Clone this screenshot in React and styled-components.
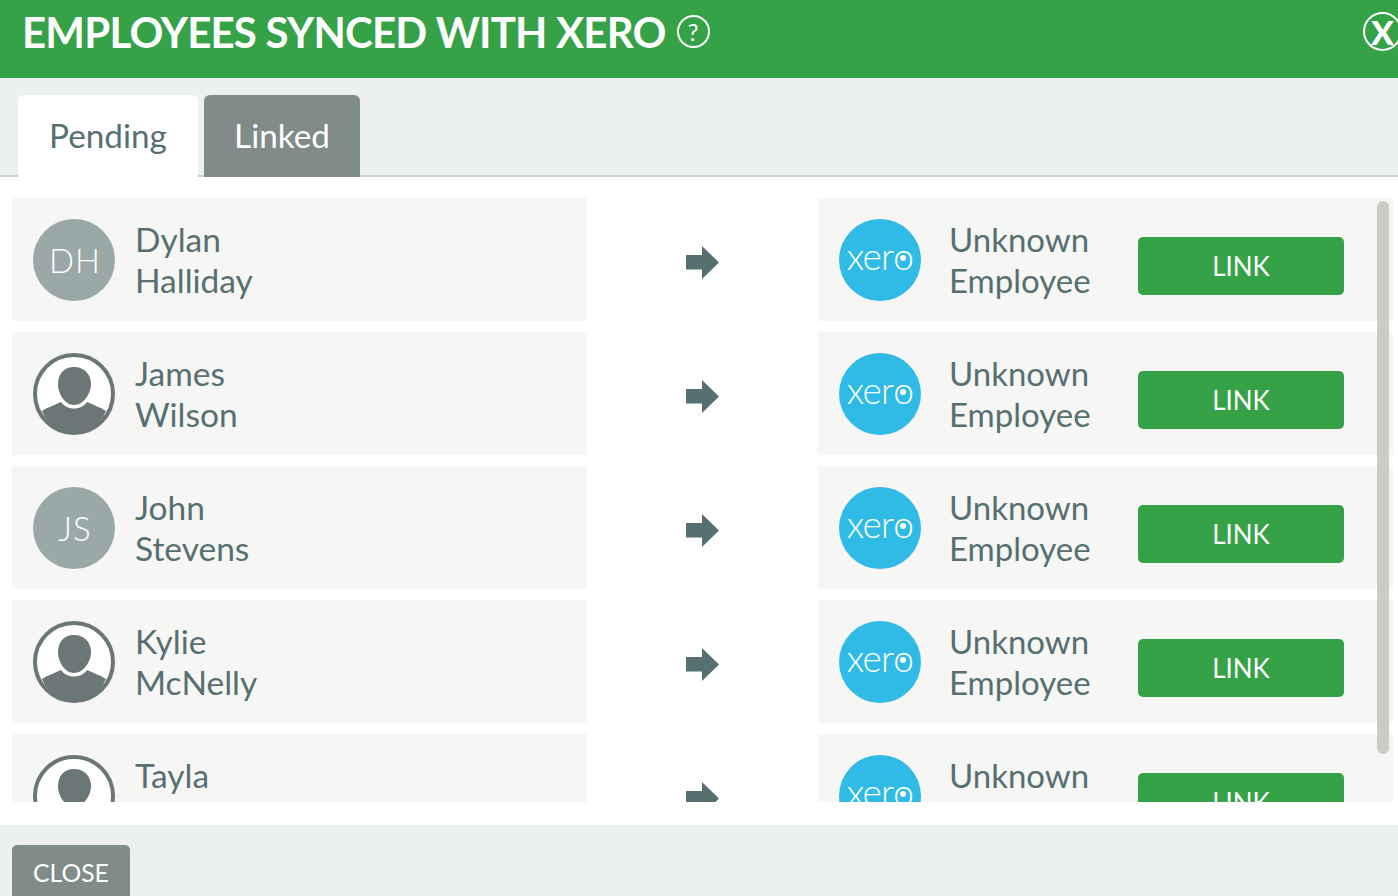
import React from 'react';
import styled, { createGlobalStyle } from 'styled-components';

const GREEN = '#35a247';
const SLATE = '#567072';
const GREY = '#7f8c8a';

const employees = [
  { id: 1, first: 'Dylan', last: 'Halliday', initials: 'DH' },
  { id: 2, first: 'James', last: 'Wilson' },
  { id: 3, first: 'John', last: 'Stevens', initials: 'JS' },
  { id: 4, first: 'Kylie', last: 'McNelly' },
  { id: 5, first: 'Tayla', last: '\u00a0' },
];

const PersonIcon = () => (
  <svg width="82" height="82" viewBox="0 0 82 82">
    <circle cx="41" cy="41" r="39" fill="#fff" stroke="#6b7676" strokeWidth="4" />
    <path d="M9 58 C15 54 22 52 28 49 C31 53 35 55.5 41 55.5 C47 55.5 51 53 54 49 C60 52 67 54 73 58 C67 72 55 80 41 80 C27 80 15 72 9 58 Z" fill="#6b7676" />
    <path d="M41 14 C51 14 58 21 58 31 C58 41 50 52 41 52 C32 52 25 41 25 31 C25 21 31 14 41 14 Z" fill="#6b7676" />
  </svg>
);

const ArrowIcon = () => (
  <svg width="33" height="33" viewBox="0 0 33 33">
    <path d="M0 9 H16 V0 L33 16.5 L16 33 V23.5 H0 Z" fill={SLATE} />
  </svg>
);

const App = () => {
  return (
    <Modal>
      <GlobalStyle />
      <Header>
        <Title>EMPLOYEES SYNCED WITH XERO</Title>
        <HelpIcon>?</HelpIcon>
        <CloseIcon>X</CloseIcon>
      </Header>
      <TabBar>
        <Tab $active>Pending</Tab>
        <Tab>Linked</Tab>
      </TabBar>
      <Body>
        <Scroller>
          {employees.map(employee => (
            <Row key={employee.id}>
              <Cell>
                {employee.initials ? (
                  <Initials>{employee.initials}</Initials>
                ) : (
                  <AvatarSlot>
                    <PersonIcon />
                  </AvatarSlot>
                )}
                <Name>
                  {employee.first}
                  <br />
                  {employee.last}
                </Name>
              </Cell>
              <ArrowCell>
                <ArrowIcon />
              </ArrowCell>
              <Cell>
                <XeroBadge>
                  xer<XeroO>o</XeroO>
                </XeroBadge>
                <XeroName>
                  Unknown
                  <br />
                  Employee
                </XeroName>
                <LinkButton>LINK</LinkButton>
              </Cell>
            </Row>
          ))}
        </Scroller>
        <ScrollThumb />
      </Body>
      <Footer>
        <CloseButton>CLOSE</CloseButton>
      </Footer>
    </Modal>
  );
};
export default App;

const GlobalStyle = createGlobalStyle`
  html, body {
    margin: 0;
    height: 100%;
    overflow: hidden;
    background: #fff;
  }
  * {
    box-sizing: border-box;
  }
`;

const Modal = styled.div`
  width: 1398px;
  height: 896px;
  display: flex;
  flex-direction: column;
  overflow: hidden;
  font-family: Lato, 'Liberation Sans', sans-serif;
  color: ${SLATE};
`;

const Header = styled.div`
  height: 78px;
  flex: none;
  padding: 0 0 15px 22px;
  display: flex;
  align-items: center;
  position: relative;
  background-color: ${GREEN};
  color: #fff;
`;

const Title = styled.h1`
  margin: 0;
  font-size: 42px;
  font-weight: 700;
  letter-spacing: -0.8px;
  white-space: nowrap;
`;

const HelpIcon = styled.span`
  width: 33px;
  height: 33px;
  margin-left: 11px;
  border: 2px solid #fff;
  border-radius: 50%;
  display: flex;
  align-items: center;
  justify-content: center;
  font-size: 24px;
  font-weight: 400;
`;

const CloseIcon = styled.span`
  position: absolute;
  left: 1363px;
  top: 12px;
  width: 39px;
  height: 39px;
  border: 2px solid #fff;
  border-radius: 50%;
  display: flex;
  align-items: center;
  justify-content: center;
  font-size: 33px;
  font-weight: 900;
`;

const TabBar = styled.div`
  height: 99px;
  flex: none;
  padding: 17px 0 0 18px;
  display: flex;
  gap: 6px;
  background-color: #ecf0f1;
  border-bottom: 2px solid #cfd1d1;
`;

const Tab = styled.div`
  width: ${props => (props.$active ? '180px' : '156px')};
  height: 82px;
  padding-bottom: 3px;
  border-radius: 6px 6px 0 0;
  display: flex;
  align-items: center;
  justify-content: center;
  font-size: 33.3px;
  background-color: ${props => (props.$active ? '#fff' : GREY)};
  color: ${props => (props.$active ? SLATE : '#fff')};
`;

const Body = styled.div`
  height: 648px;
  flex: none;
  padding: 21px 0 23px 12px;
  position: relative;
  background-color: #fff;
`;

const Scroller = styled.div`
  height: 100%;
  display: flex;
  flex-direction: column;
  gap: 11px;
  overflow: hidden;
`;

const ScrollThumb = styled.div`
  position: absolute;
  left: 1377px;
  top: 24px;
  width: 12px;
  height: 553px;
  border-radius: 6px;
  background-color: #cbcbc8;
`;

const Row = styled.div`
  flex: none;
  height: 123px;
  display: grid;
  grid-template-columns: 575px 231px 575px;
`;

const Cell = styled.div`
  padding-left: 21px;
  display: flex;
  align-items: center;
  background-color: #f6f6f4;
`;

const ArrowCell = styled.div`
  display: flex;
  align-items: center;
  justify-content: center;
  padding-top: 5px;
`;

const AvatarSlot = styled.div`
  width: 82px;
  height: 82px;
  flex: none;
  display: flex;
`;

const Initials = styled.div`
  width: 82px;
  height: 82px;
  flex: none;
  padding-left: 2px;
  border-radius: 50%;
  display: flex;
  align-items: center;
  justify-content: center;
  font-size: 33px;
  font-weight: 300;
  letter-spacing: 1px;
  color: #fff;
  background-color: #9aa9a7;
`;

const Name = styled.div`
  margin-left: 20px;
  font-size: 33.5px;
  line-height: 41px;
`;

const XeroBadge = styled.div`
  width: 82px;
  height: 82px;
  flex: none;
  padding-bottom: 8px;
  border-radius: 50%;
  display: flex;
  align-items: center;
  justify-content: center;
  font-size: 37px;
  font-weight: 300;
  letter-spacing: -0.8px;
  color: #fff;
  background-color: #2fbbe6;
`;

const XeroO = styled.span`
  position: relative;
  &::after {
    content: '';
    position: absolute;
    left: 50%;
    top: 50%;
    width: 6px;
    height: 6px;
    margin: -1px 0 0 -3.5px;
    border-radius: 50%;
    background-color: #fff;
  }
`;

const XeroName = styled(Name)`
  width: 188px;
  margin-left: 28px;
  flex: none;
  font-size: 33px;
`;

const LinkButton = styled.button`
  width: 206px;
  height: 58px;
  margin-top: 13px;
  margin-left: 1px;
  padding: 0;
  border: none;
  border-radius: 5px;
  font-family: inherit;
  font-size: 26px;
  color: #fff;
  background-color: ${GREEN};
`;

const Footer = styled.div`
  flex: 1;
  padding: 20px 0 0 12px;
  background-color: #ecf0f1;
`;

const CloseButton = styled.button`
  width: 118px;
  height: 58px;
  padding: 0 0 4px;
  border: none;
  border-radius: 5px;
  font-family: inherit;
  font-size: 24.7px;
  color: #fff;
  background-color: ${GREY};
`;
